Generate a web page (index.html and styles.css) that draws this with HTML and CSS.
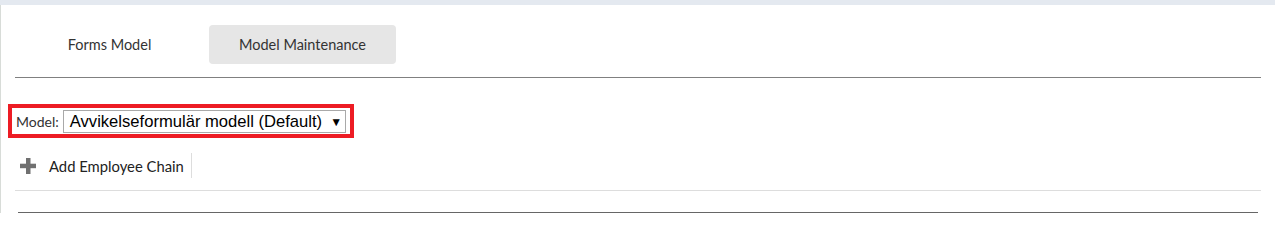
FILE: index.html
```html
<!DOCTYPE html>
<html>
<head>
<meta charset="utf-8">
<link rel="stylesheet" href="styles.css">
</head>
<body>
<div class="topband"></div>
<div class="page">
  <div class="tabs">
    <div class="tab">Forms Model</div>
    <div class="tab active">Model Maintenance</div>
  </div>
  <div class="rule dark"></div>
  <div class="model-box">
    <span class="model-label">Model:</span>
    <div class="select"><span class="select-text">Avvikelseformulär modell (Default)</span><span class="caret">▼</span></div>
  </div>
  <div class="toolbar">
    <div class="tool">
      <svg class="plus" width="16" height="16" viewBox="0 0 16 16"><rect x="6" y="0" width="4.5" height="16" fill="#707070"/><rect x="0" y="5.7" width="16" height="4.5" fill="#707070"/></svg>
      <span class="tool-text">Add Employee Chain</span>
    </div>
  </div>
  <div class="rule light"></div>
  <div class="rule bottom"></div>
</div>
</body>
</html>
```

FILE: styles.css
```css
html, body {
  margin: 0;
  padding: 0;
  background: #ffffff;
  font-family: "Lato", "Open Sans", sans-serif;
  color: #333333;
  overflow: hidden;
}
.topband {
  height: 5px;
  background: #e4e9f0;
}
.page {
  border-left: 1px solid #d8dcd8;
  height: 208px;
  padding: 20px 14px 0 14px;
  box-sizing: border-box;
}
.tabs {
  display: flex;
  gap: 6px;
  padding-left: 1px;
}
.tab {
  width: 187px;
  height: 39px;
  display: flex;
  align-items: center;
  justify-content: center;
  font-size: 14.5px;
  color: #333333;
  border-radius: 4px;
}
.tab.active {
  background: #e6e6e6;
}
.rule {
  height: 1px;
}
.rule.dark {
  margin-top: 13px;
  background: #808080;
}
.model-box {
  margin: 26px 0 0 -7px;
  width: 334px;
  height: 26px;
  border: 4px solid #ed1c24;
  display: flex;
  align-items: center;
  gap: 4px;
  padding-left: 4px;
  box-sizing: content-box;
}
.model-label {
  font-size: 14px;
  color: #333333;
}
.select {
  height: 23px;
  width: 283px;
  border: 1px solid #a9a9a9;
  box-sizing: border-box;
  display: flex;
  align-items: center;
  padding-left: 6px;
  font-family: "Liberation Sans", Arial, sans-serif;
  font-size: 16.6px;
  color: #000000;
  margin-top: 1px;
}
.caret {
  font-size: 12px;
  margin-left: 8px;
}
.toolbar {
  margin-top: 15px;
  display: flex;
  height: 25px;
}
.tool {
  display: flex;
  align-items: center;
  gap: 13px;
  padding: 0 7px 0 5px;
  border-right: 1px solid #dddddd;
}
.plus {
  display: block;
}
.tool-text {
  font-size: 14.8px;
  color: #222222;
}
.rule.light {
  margin-top: 12px;
  background: #dddddd;
}
.rule.bottom {
  margin: 21px 3px 0 3px;
  background: #666666;
}
```
